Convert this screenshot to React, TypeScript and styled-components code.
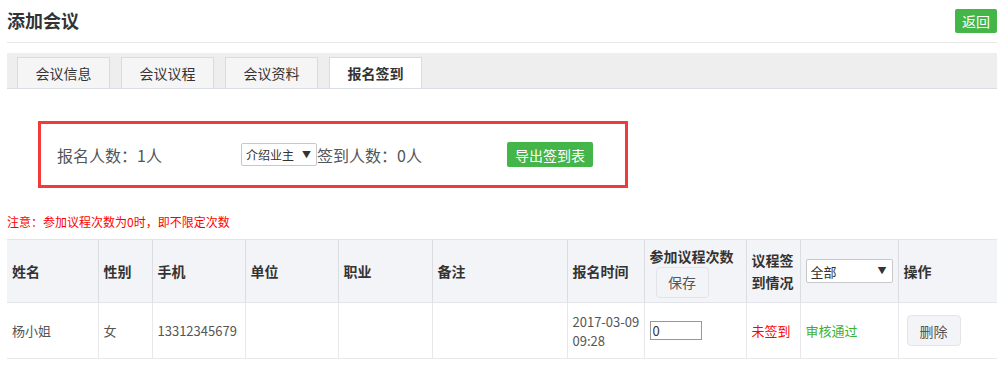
import React from 'react';
import styled, { createGlobalStyle } from 'styled-components';

const GlobalStyle = createGlobalStyle`
  body {
    margin: 0;
    background: #fff;
    font-family: "Noto Sans CJK SC", "Noto Sans", sans-serif;
    color: #333;
  }
`;

const Page = styled.div`
  padding: 0 0 0 7px;
  width: 990px;
`;

const TitleBar = styled.div`
  display: flex;
  align-items: center;
  justify-content: space-between;
  height: 43px;
  border-bottom: 1px solid #e8e8e8;
  box-sizing: border-box;
`;

const Title = styled.h1`
  margin: 0;
  font-size: 18px;
  font-weight: bold;
  color: #333;
  line-height: 20px;
  margin-top: -2px;
`;

const GreenButton = styled.button<{ $w?: number; $h?: number }>`
  width: ${(p) => p.$w ?? 42}px;
  height: ${(p) => p.$h ?? 24}px;
  padding: 0;
  border: none;
  border-radius: 2px;
  background: #44b549;
  color: #fff;
  font-family: inherit;
  font-size: 14px;
  line-height: 24px;
`;

const BackButton = styled(GreenButton)`
  margin-top: -1px;
`;

const TabBar = styled.div`
  display: flex;
  align-items: flex-end;
  gap: 11px;
  margin-top: 10px;
  height: 35px;
  padding-left: 10px;
  background: #eeeeee;
  border-bottom: 1px solid #dadde4;
`;

const Tab = styled.div<{ $active?: boolean }>`
  width: 93px;
  height: 31px;
  box-sizing: border-box;
  border: 1px solid #d6dbe5;
  border-bottom: none;
  background: ${(p) => (p.$active ? '#fff' : '#f5f5f5')};
  font-size: 14px;
  font-weight: ${(p) => (p.$active ? 'bold' : 'normal')};
  color: #333;
  display: flex;
  align-items: center;
  justify-content: center;
`;

const SummaryBox = styled.div`
  margin: 32px 0 0 31px;
  width: 590px;
  height: 67px;
  box-sizing: border-box;
  border: 3px solid #f23a3a;
  display: flex;
  align-items: center;
  padding-left: 16px;
`;

const SummaryText = styled.span<{ $w?: number }>`
  font-size: 16px;
  color: #555;
  width: ${(p) => (p.$w ? `${p.$w}px` : 'auto')};
  line-height: 22px;
`;

const SelectWrap = styled.span`
  position: relative;
  display: inline-block;
  line-height: 0;
`;

const SmallSelect = styled.select<{ $w: number; $h: number; $fs: number }>`
  appearance: none;
  width: ${(p) => p.$w}px;
  height: ${(p) => p.$h}px;
  box-sizing: border-box;
  border: 1px solid #c8c8c8;
  border-radius: 2px;
  background: #fff;
  font-family: inherit;
  font-size: ${(p) => p.$fs}px;
  color: #333;
  padding: 0 4px;
`;

const Caret = styled.span`
  position: absolute;
  right: 6px;
  top: 50%;
  transform: translateY(-50%);
  font-size: 9px;
  line-height: 10px;
  color: #333;
  pointer-events: none;
`;

const Note = styled.div`
  margin-top: 26px;
  font-size: 12px;
  color: #f00;
  line-height: 16px;
`;

const Table = styled.table`
  margin-top: 9px;
  width: 990px;
  table-layout: fixed;
  border-collapse: collapse;
`;

const Th = styled.th`
  background: #f3f4f8;
  height: 62px;
  border-top: 1px solid #e3e4e9;
  border-bottom: 1px solid #e3e4e9;
  border-left: 1px solid #dcdde2;
  padding: 0 5px;
  text-align: left;
  font-size: 14px;
  font-weight: bold;
  color: #333;
  line-height: 22px;
  &:first-child {
    border-left: none;
  }
`;

const Td = styled.td<{ $color?: string }>`
  height: 55px;
  border-bottom: 1px solid #e8e8ec;
  border-left: 1px solid #e8e8ec;
  padding: 0 5px;
  font-size: 13px;
  color: ${(p) => p.$color ?? '#555'};
  line-height: 19px;
  white-space: nowrap;
  &:first-child {
    border-left: none;
  }
`;

const GrayButton = styled.button<{ $w: number; $h: number }>`
  width: ${(p) => p.$w}px;
  height: ${(p) => p.$h}px;
  padding: 0;
  border: 1px solid #e3e4e8;
  border-radius: 4px;
  background: #f3f4f8;
  font-family: inherit;
  font-size: 14px;
  color: #555;
`;

const CountInput = styled.input`
  width: 52px;
  height: 19px;
  box-sizing: border-box;
  border: 1px solid #999;
  padding: 0 2px;
  font-family: inherit;
  font-size: 13px;
  color: #333;
`;

const HeaderStack = styled.div`
  display: flex;
  flex-direction: column;
  align-items: flex-start;
`;

const Select = ({ w, h, fs, label }: { w: number; h: number; fs: number; label: string }) => (
  <SelectWrap>
    <SmallSelect $w={w} $h={h} $fs={fs}>
      <option>{label}</option>
    </SmallSelect>
    <Caret>▼</Caret>
  </SelectWrap>
);

const widths = [91, 54, 93, 93, 94, 135, 77, 102, 54, 98, 99];

export default function App() {
  return (
    <Page>
      <GlobalStyle />
      <TitleBar>
        <Title>添加会议</Title>
        <BackButton>返回</BackButton>
      </TitleBar>
      <TabBar>
        <Tab>会议信息</Tab>
        <Tab>会议议程</Tab>
        <Tab>会议资料</Tab>
        <Tab $active>报名签到</Tab>
      </TabBar>
      <SummaryBox>
        <SummaryText $w={184}>报名人数：1人</SummaryText>
        <Select w={76} h={23} fs={12} label="介绍业主" />
        <SummaryText $w={190}>签到人数：0人</SummaryText>
        <GreenButton $w={86} $h={25}>导出签到表</GreenButton>
      </SummaryBox>
      <Note>注意：参加议程次数为0时，即不限定次数</Note>
      <Table>
        <colgroup>
          {widths.map((w, i) => (
            <col key={i} style={{ width: w }} />
          ))}
        </colgroup>
        <thead>
          <tr>
            <Th>姓名</Th>
            <Th>性别</Th>
            <Th>手机</Th>
            <Th>单位</Th>
            <Th>职业</Th>
            <Th>备注</Th>
            <Th>报名时间</Th>
            <Th>
              <HeaderStack>
                参加议程次数
                <GrayButton $w={53} $h={31} style={{ marginLeft: 6 }}>保存</GrayButton>
              </HeaderStack>
            </Th>
            <Th>议程签到情况</Th>
            <Th>
              <Select w={87} h={24} fs={13} label="全部" />
            </Th>
            <Th>操作</Th>
          </tr>
        </thead>
        <tbody>
          <tr>
            <Td>杨小姐</Td>
            <Td>女</Td>
            <Td>13312345679</Td>
            <Td></Td>
            <Td></Td>
            <Td></Td>
            <Td>
              2017-03-09
              <br />
              09:28
            </Td>
            <Td>
              <CountInput defaultValue="0" />
            </Td>
            <Td $color="#f00">未签到</Td>
            <Td $color="#3cb034">审核通过</Td>
            <Td>
              <GrayButton $w={54} $h={31} style={{ marginLeft: 3 }}>删除</GrayButton>
            </Td>
          </tr>
        </tbody>
      </Table>
    </Page>
  );
}
